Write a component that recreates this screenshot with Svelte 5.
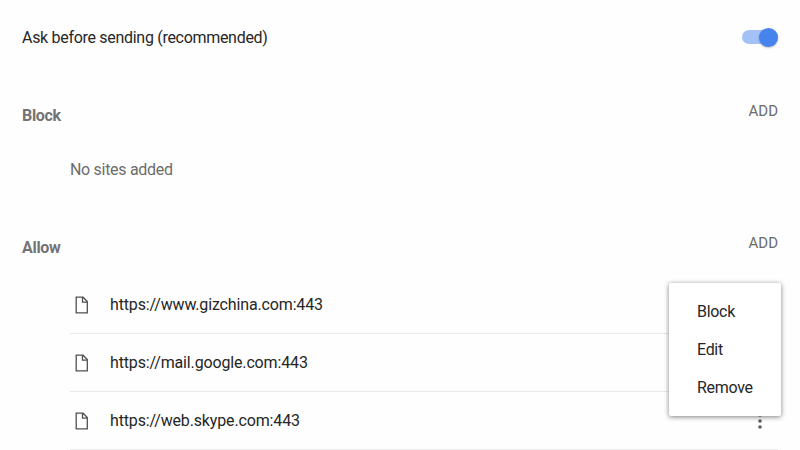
<script>
	let askFirst = $state(true);
	let openMenu = $state(2);

	const allowed = [
		'https://www.gizchina.com:443',
		'https://mail.google.com:443',
		'https://web.skype.com:443'
	];
	const actions = ['Block', 'Edit', 'Remove'];
</script>

<main>
	<div class="setting">
		<span class="label">Ask before sending (recommended)</span>
		<button
			class="toggle"
			class:on={askFirst}
			role="switch"
			aria-checked={askFirst}
			aria-label="Ask before sending"
			onclick={() => (askFirst = !askFirst)}
		>
			<span class="knob"></span>
		</button>
	</div>

	<section>
		<header>
			<h2>Block</h2>
			<button class="add">ADD</button>
		</header>
		<p class="empty">No sites added</p>
	</section>

	<section>
		<header>
			<h2>Allow</h2>
			<button class="add">ADD</button>
		</header>
		<ul class="sites">
			{#each allowed as site, i}
				<li>
					<svg class="file" width="14" height="18" viewBox="0 0 14 18">
						<path d="M1.2 1.2h6.9l4.2 4.4v11.2H1.2zM7.5 1.4v4.8h4.6" />
					</svg>
					<span class="url">{site}</span>
					<button class="more" aria-label="More actions" onclick={() => (openMenu = i)}>
						<svg width="6" height="18" viewBox="0 0 6 18">
							<circle cx="3" cy="3" r="1.8" />
							<circle cx="3" cy="9" r="1.8" />
							<circle cx="3" cy="15" r="1.8" />
						</svg>
					</button>
					{#if openMenu === i}
						<div class="menu">
							{#each actions as action}
								<button onclick={() => (openMenu = -1)}>{action}</button>
							{/each}
						</div>
					{/if}
				</li>
			{/each}
		</ul>
	</section>
</main>

<style>
	:global(body) {
		background: #fefefe;
	}

	main {
		box-sizing: border-box;
		height: 450px;
		padding: 0 22px;
		overflow: hidden;
		font-family: Roboto, sans-serif;
		font-size: 16px;
		line-height: 20px;
		letter-spacing: -0.3px;
		color: #262626;
	}

	button {
		padding: 0;
		border: 0;
		background: none;
		font: inherit;
		letter-spacing: inherit;
		color: inherit;
		cursor: pointer;
	}

	.setting {
		display: flex;
		align-items: center;
		justify-content: space-between;
		height: 74px;
		margin-bottom: 12px;
	}

	.label {
		padding-top: 2px;
	}

	.toggle {
		display: flex;
		align-items: center;
		width: 36px;
		height: 14px;
		border-radius: 7px;
		background: #bdbdbd;
	}

	.toggle.on {
		justify-content: flex-end;
		background: #a3c1f7;
	}

	.knob {
		width: 19px;
		height: 19px;
		border-radius: 50%;
		background: #fafafa;
		box-shadow: 0 1px 2px rgba(0, 0, 0, 0.25);
	}

	.on .knob {
		background: #4683ed;
	}

	header {
		display: flex;
		align-items: center;
		justify-content: space-between;
		height: 58px;
	}

	h2 {
		margin: 0;
		padding-top: 2px;
		font-size: 16px;
		font-weight: 700;
		color: #737373;
	}

	.add {
		margin-bottom: 9px;
		font-size: 15px;
		letter-spacing: 0;
		color: #6c6c6c;
	}

	.empty {
		margin: 0 0 24px 48px;
		padding-top: 2px;
		line-height: 48px;
		color: #6c6c6c;
	}

	.sites {
		margin: 0 0 0 48px;
		padding: 0;
		list-style: none;
	}

	li {
		position: relative;
		display: flex;
		align-items: center;
		box-sizing: border-box;
		height: 58px;
		border-bottom: 1px solid #e8e8e8;
	}

	.file {
		margin: 0 21px 0 5px;
		fill: none;
		stroke: #505050;
		stroke-width: 1.3;
	}

	.url {
		flex: 1;
		letter-spacing: -0.15px;
	}

	.more {
		display: flex;
		margin-right: 15px;
		fill: #5a5a5a;
	}

	/* sits over the row's own menu button */
	.menu {
		position: absolute;
		right: -3px;
		bottom: 33px;
		z-index: 1;
		display: flex;
		flex-direction: column;
		box-sizing: border-box;
		width: 112px;
		padding: 10px 0 9px;
		border-radius: 2px;
		background: #fff;
		box-shadow: 0 1px 5px rgba(0, 0, 0, 0.5);
	}

	.menu button {
		height: 38px;
		padding-left: 28px;
		text-align: left;
	}
</style>
